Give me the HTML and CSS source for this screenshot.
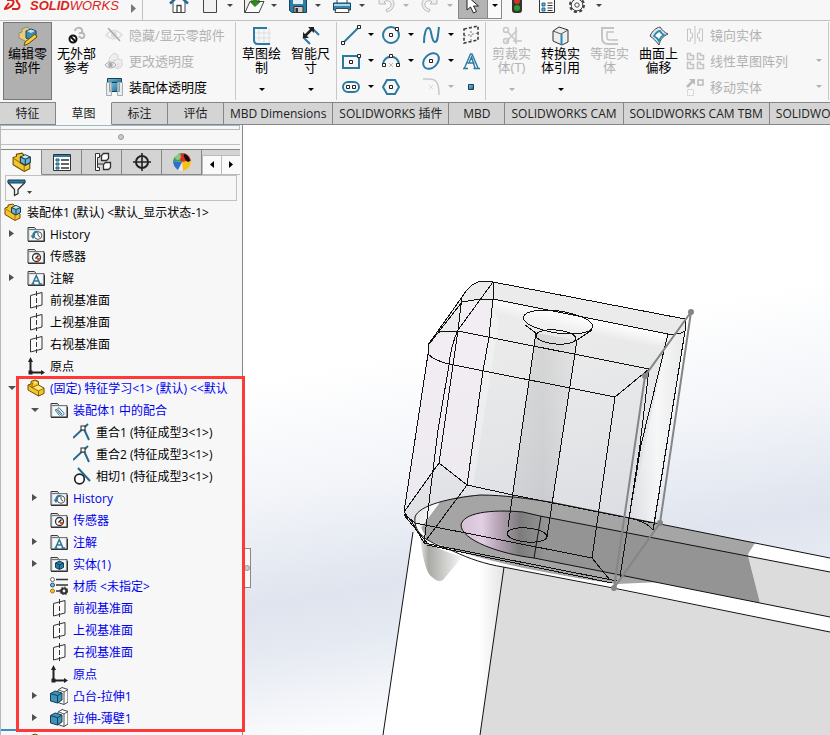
FILE: index.html
```html
<!DOCTYPE html>
<html lang="zh-CN">
<head>
  <meta charset="UTF-8" />
  <meta name="viewport" content="width=device-width, initial-scale=1.0" />
  <title>SOLIDWORKS - 装配体1</title>
  <link rel="stylesheet" href="styles.css">
</head>
<body>
  <!-- shared icons -->
  <svg class="sprite" aria-hidden="true">
    <defs>
      <linearGradient id="blue" x1="0" y1="0" x2="1" y2="1">
        <stop offset="0" stop-color="#7cc3e0" /><stop offset="1" stop-color="#1d6a92" />
      </linearGradient>
    </defs>
    <symbol id="caret" viewBox="0 0 6 4"><path d="M0 0h6L3 3z" fill="currentColor" /></symbol>
    <symbol id="closed" viewBox="0 0 8 10"><path d="M1 1v7l5-3.500z" fill="#505050" /></symbol>
    <symbol id="open" viewBox="0 0 8 10"><path d="M0 3h8L4 7z" fill="#505050" /></symbol>
    <symbol id="folder" viewBox="0 0 18 18">
      <path d="M1 16V2.500h6.500l1.500 2h8V16z" fill="#dfe3e6" stroke="#3c3c3c" />
      <path d="M1.500 4.500h15" stroke="#777" />
      <rect x="3" y="6" width="12.500" height="9" fill="#f6f8fa" />
      <path d="M1 16.500h16.500V6" fill="none" stroke="#333" />
    </symbol>
    <symbol id="history" viewBox="0 0 18 18">
      <use href="#folder" />
      <circle cx="11" cy="10.500" r="3.800" fill="#fff" stroke="#555" />
      <path d="M11 8v2.500l2 1.500" fill="none" stroke="#444" />
      <path d="M11 7c-3-1-5 1-5 4" fill="none" stroke="#2c7ba1" stroke-width="1.800" /><path d="M3.500 10.500h5L6 14z" fill="#2c7ba1" />
    </symbol>
    <symbol id="sensor" viewBox="0 0 18 18">
      <use href="#folder" />
      <circle cx="9.500" cy="10.500" r="4" fill="#fff" stroke="#333" stroke-width="1.300" />
      <path d="M8.500 11.500l3-3" stroke="#222" stroke-width="1.500" /><path d="M9.500 11l4 0-2 4z" fill="#e0461c" />
    </symbol>
    <symbol id="note" viewBox="0 0 18 18">
      <use href="#folder" />
      <path d="M5.500 15L9.300 6.500 13 15M6.700 12h5M4.500 15h3M11.500 15h3.500" fill="none" stroke="#2c7396" stroke-width="1.500" />
    </symbol>
    <symbol id="solids" viewBox="0 0 18 18">
      <use href="#folder" />
      <path d="M9.500 6l4 2v4.500l-4 2-4-2V8z" fill="#2c7ba1" stroke="#123f57" /><path d="M5.500 8l4 2 4-2M9.500 10v4.500" fill="none" stroke="#123f57" />
    </symbol>
    <symbol id="mates" viewBox="0 0 18 18">
      <use href="#folder" />
      <path d="M6 8l5 6c2 1 4-1 2.500-2.500L9.500 7.200c-1-1-2.500.3-1.500 1.300l4 4.500M6 8c-1 1 0 2.500 1 3.500l2.500 3" fill="none" stroke="#2c6f90" />
    </symbol>
    <symbol id="plane" viewBox="0 0 18 18">
      <path d="M3.500 4.500L15 1.500V14L3.500 17z" fill="#fafafa" stroke="#333" />
      <path d="M9.500 0v18" stroke="#333" stroke-dasharray="5 2" />
    </symbol>
    <symbol id="origin" viewBox="0 0 18 18">
      <path d="M3.500 3v12.500H15" fill="none" stroke="#222" stroke-width="2" />
      <path d="M3.500 0L6 5H1zM18 15.500l-4-2.500v5zM1.500 13.500h4v4h-4z" fill="#222" />
    </symbol>
    <symbol id="part" viewBox="0 0 18 18">
      <path d="M1 6l3-1V2.500L8 1l3.500 1.500V6L17 9v5.500L11.500 17 1 11z" fill="#f5c52c" stroke="#6d4d00" />
      <path d="M1 6l4 2.500v-4L11 2.500M5 8.500l6.500 3.500V17M11.500 12l5.500-3M5 8.500L11 6" fill="none" stroke="#8b6500" />
      <path d="M5.500 4l3-1.500 2.500 1-3.500 1.500zM6.500 8.500l4.500-2 5 2.700-4.500 2z" fill="#ffe68b" />
    </symbol>
    <symbol id="assembly" viewBox="0 0 18 18">
      <path d="M1 5l3-1V2l5-1 2 2v3l5 5v4l-5 2.500L1 11.500z" fill="#f5c52c" stroke="#6d4d00" />
      <path d="M2 6l9 6v5" fill="none" stroke="#a97b00" />
      <path d="M7.500 4.500L12 2.500l4.500 2v5L12 12 7.500 9.500z" fill="#6db3d3" stroke="#173e55" />
      <path d="M8.500 4.500L12 3l3.500 1.500L12 6z" fill="#c9e8f4" /><path d="M7.500 4.500l4.500 2 4.500-2M12 6.500V12" fill="none" stroke="#173e55" />
    </symbol>
    <symbol id="coincident" viewBox="0 0 18 18">
      <path d="M0 15L15 1M10.500 5l5.500 12" fill="none" stroke="#246a90" stroke-width="2" />
      <rect x="8" y="3" width="4" height="4" fill="#fff" stroke="#222" />
    </symbol>
    <symbol id="tangent" viewBox="0 0 18 18">
      <path d="M5 1l12 13" stroke="#246a90" stroke-width="2" />
      <circle cx="6.500" cy="12" r="4.800" fill="#fff" stroke="#222" stroke-width="1.700" />
    </symbol>
    <symbol id="material" viewBox="0 0 18 18">
      <path d="M6 2.500h12M6 8h12M6 14h12" stroke="#333" stroke-width="1.600" />
      <circle cx="2.500" cy="2.500" r="2" fill="#fff" stroke="#666" /><circle cx="2.500" cy="8" r="2" fill="#6cc0e5" stroke="#346" /><circle cx="2.500" cy="14" r="2" fill="#f5c52c" stroke="#a70" />
      <circle cx="14" cy="14" r="2.500" fill="#f7f7f7" stroke="#333" stroke-width="2.200" />
      <circle cx="14" cy="14" r="4" fill="none" stroke="#333" stroke-dasharray="1.600 1.500" />
    </symbol>
    <symbol id="extrude" viewBox="0 0 18 18">
      <path d="M8 3l4-2.500 6 2V15l-4 2.500-6-2z" fill="#fff" stroke="#444" /><path d="M14 17V5L9 3M14 5l4-2.500" fill="none" stroke="#555" />
      <path d="M.5 6.500L5 4l7 2v7l-4.500 3-7-2z" fill="#3f93bb" stroke="#123f57" /><path d="M.5 6.500l7 2.200L12 6M7.500 8.700V16" fill="none" stroke="#123f57" />
    </symbol>
  </svg>

  <header class="titlebar">
    <a class="brand" href="#">
      <svg class="brand-mark" width="22" height="14" viewBox="0 0 22 14"><path d="M3 2h4c4 0 3 5-1 7-2 1.500-4 2-6 2M5 5L1 10M20 1h-5c-3 0-3 2-1 4 3 3 1 6-1 6H8" fill="none" stroke="#d9241c" stroke-width="2" /></svg>
      <span><b>SOLID</b>WORKS</span>
    </a>
    <button class="flyout" aria-label="菜单"><svg width="6" height="10"><path d="M0 0v9l5-4.500z" fill="#777" /></svg></button>
    <div class="quick">
      <button class="tool home" aria-label="主页"><svg width="20" height="20" viewBox="0 0 20 20"><path d="M4 8v10.500h12V8" fill="#fff" stroke="#444" /><path d="M8 18.500v-7h4v7M14.500 2v4" fill="none" stroke="#444" stroke-width="1.300" /><path d="M1 9.500l9-8 9 8" fill="none" stroke="#1f6b92" stroke-width="2.500" /></svg></button>
      <button class="tool" aria-label="新建"><svg width="20" height="20" viewBox="0 0 20 20"><path d="M3.500 1.500H13l3.500 4v13h-13z" fill="#f2f2f2" stroke="#444" /></svg></button>
      <button class="drop" aria-label="更多"><svg width="6" height="4"><use href="#caret" /></svg></button>
      <button class="tool" aria-label="打开"><svg width="22" height="20" viewBox="0 0 22 20"><path d="M1.500 18.500V4H6l2 2h8v12.500z" fill="#eee" stroke="#444" /><path d="M2 18.500L7 7.500h14l-5 11z" fill="#fafafa" stroke="#444" /><path d="M10 3h4v5h3.500L12 13 7 8h3z" fill="#2f8a1c" /></svg></button>
      <button class="drop" aria-label="更多"><svg width="6" height="4"><use href="#caret" /></svg></button>
      <button class="tool" aria-label="保存"><svg width="20" height="20" viewBox="0 0 20 20"><path d="M1.500 1.500h17v17H4l-2.500-2z" fill="#2d7ea8" stroke="#14445f" /><path d="M5 2h10v8H5z" fill="#e3f0f6" /><path d="M6 12.500h9v6H6z" fill="#ccc" stroke="#333" /><path d="M7.500 14h2.500v4H7.500z" fill="#333" /></svg></button>
      <button class="drop" aria-label="更多"><svg width="6" height="4"><use href="#caret" /></svg></button>
      <button class="tool" aria-label="打印"><svg width="20" height="20" viewBox="0 0 20 20"><path d="M5 9V2h10v7" fill="#fff" stroke="#444" /><path d="M1.500 9h17v7h-17z" fill="#3186ae" stroke="#14445f" /><path d="M2 11h16" stroke="#a7d7ea" stroke-width="2" /><path d="M4 14.500h12l1 4H3z" fill="#fff" stroke="#444" /></svg></button>
      <button class="drop" aria-label="更多"><svg width="6" height="4"><use href="#caret" /></svg></button>
      <button class="tool" aria-label="撤消" disabled><svg width="18" height="20" viewBox="0 0 18 20"><path d="M2 3v7h7l-2-2c4-3 8 0 7 4-1 2-3 3-5 3.500l1 2.500c4-1 7-4 7-8 0-6-7-9-12-5z" fill="#eee" stroke="#bbb" /></svg></button>
      <button class="drop" aria-label="更多" disabled><svg width="6" height="4"><use href="#caret" /></svg></button>
      <button class="tool" aria-label="重做" disabled><svg width="18" height="20" viewBox="0 0 18 20"><path d="M16 3v7H9l2-2c-4-3-8 0-7 4 1 2 3 3 5 3.500L8 18c-4-1-7-4-7-8 0-6 7-9 12-5z" fill="#eee" stroke="#bbb" /></svg></button>
      <button class="drop" aria-label="更多" disabled><svg width="6" height="4"><use href="#caret" /></svg></button>
    </div>
    <div class="selector">
      <button class="select-tool" aria-label="选择"><svg width="14" height="20" viewBox="0 0 14 20"><path d="M1 1v14l3.500-3 3 6 3-1.500-3-5.500h5z" fill="#fff" stroke="#222" /></svg></button>
      <button class="select-drop" aria-label="更多"><svg width="6" height="4"><use href="#caret" /></svg></button>
    </div>
    <div class="options">
      <button class="tool" aria-label="重建模型"><svg width="12" height="20" viewBox="0 0 12 20"><rect x="1" y="0" width="10" height="19" rx="3" fill="#333" /><circle cx="6" cy="7" r="3" fill="#d33525" /><circle cx="6" cy="14" r="3" fill="#2e9b26" /></svg></button>
      <button class="tool" aria-label="文件属性"><svg width="16" height="20" viewBox="0 0 16 20"><path d="M.5 1.500h15v17H.5z" fill="#fff" stroke="#333" /><path d="M3 9h3v3H3zM3 14h3v3H3z" fill="#62b2d4" stroke="#1f6b92" /><path d="M1 3h14M8.500 9h5M8.500 11.500h5M8.500 14h5M8.500 16.500h5" stroke="#333" /></svg></button>
      <button class="tool" aria-label="选项"><svg width="18" height="20" viewBox="0 0 18 20"><circle cx="9" cy="11" r="7" fill="none" stroke="#444" stroke-width="2" stroke-dasharray="3.200 2.300" /><circle cx="9" cy="11" r="5.800" fill="#fafafa" stroke="#444" /><circle cx="9" cy="11" r="2.200" fill="#fff" stroke="#444" /></svg></button>
      <button class="drop" aria-label="更多"><svg width="6" height="4"><use href="#caret" /></svg></button>
    </div>
  </header>

  <section class="ribbon">
    <button class="big pressed">
      <svg width="20" height="20" viewBox="0 0 20 20"><path d="M1 7l3-1V3l5-2 3 2v6l-1 8-10-5z" fill="#e6cd86" stroke="#9b8a5e" /><path d="M8 5l5-2 5 2v6l-5 3-5-2z" fill="#3d8eb5" stroke="#183f55" /><path d="M9 5l4-1.500L17 5l-4 2z" fill="#bfe2f1" /><path d="M7 16L17 8l2 3-9 7-4 1.500z" fill="#f7cf3a" stroke="#6b4d00" /></svg>
      <span>编辑零<br>部件</span>
    </button>
    <button class="big">
      <svg width="20" height="20" viewBox="0 0 20 20"><path d="M8 5c0-4 6-4 7-1 1 2-1 4-3 3M13 7c4-1 5 2 4 4s-4 1-5-1" fill="none" stroke="#b8b8b8" stroke-width="2" /><circle cx="6" cy="13" r="3.500" fill="#fff" stroke="#111" stroke-width="2" /><path d="M3.500 10.500l5 5" stroke="#111" stroke-width="2" /></svg>
      <span>无外部<br>参考</span>
    </button>
    <div class="stack assembly-tools">
      <button disabled><svg width="20" height="20" viewBox="0 0 20 20"><path d="M2 10c5-6 11-6 16 0-5 5-11 5-16 0z" fill="none" stroke="#ddd" stroke-width="1.500" /><circle cx="10" cy="9.500" r="3" fill="#ddd" /><path d="M4 3l12 13" stroke="#aaa" stroke-width="1.500" /></svg>隐藏/显示零部件</button>
      <button disabled><svg width="20" height="20" viewBox="0 0 20 20"><path d="M6 6l4-4 4 2v4l4 1v6l-4 3-4-2-5-1V9z" fill="#eee" stroke="#d5d5d5" /><path d="M10 8v7M14 8l-4 2M14 12v5" stroke="#d5d5d5" /><path d="M1 14c3-4 8-4 11 0-3 4-8 4-11 0z" fill="#eee" stroke="#aaa" /><circle cx="6.500" cy="14" r="2.300" fill="#aaa" /></svg>更改透明度</button>
      <button><svg width="20" height="20" viewBox="0 0 20 20"><path d="M3.500 1.500h14v4h-14z" fill="url(#blue)" stroke="#123f57" /><path d="M5.500 5.500h10v9h-10z" fill="url(#blue)" stroke="#123f57" /><path d="M2.500 5.500h5v13h-5zM13.500 5.500h5v13h-5z" fill="#dde6ea" fill-opacity=".6" stroke="#aaa" /></svg>装配体透明度</button>
    </div>
    <div class="group sketch-main">
      <button class="big">
        <svg width="20" height="20" viewBox="0 0 20 20"><path d="M7 2v16M12 2v16M17 2v16M2 7h17M2 12h17" stroke="#ddd" /><path d="M15 2H2v12c0 3 2 4 4 4h12" fill="none" stroke="#2b7aa2" stroke-width="2" /></svg>
        <span>草图绘<br>制</span>
        <svg class="down" width="6" height="4"><use href="#caret" /></svg>
      </button>
      <button class="big">
        <svg width="20" height="20" viewBox="0 0 20 20"><path d="M2 11l7 7M11 2l7 7" stroke="#2b7aa2" stroke-width="2" /><path d="M4 10l7-7" stroke="#222" stroke-width="2.500" /><path d="M2 6v6h6zM7 1h6v6z" fill="#222" /></svg>
        <span>智能尺<br>寸</span>
        <svg class="down" width="6" height="4"><use href="#caret" /></svg>
      </button>
    </div>
    <div class="group entities">
      <button aria-label="直线"><svg width="20" height="20" viewBox="0 0 20 20"><path d="M2 18L18 2" stroke="#2b7aa2" stroke-width="2" /><path d="M.5 16.500h3v3h-3zM16.500.5h3v3h-3z" fill="#fff" stroke="#222" /></svg></button>
      <button aria-label="更多"><svg width="6" height="4"><use href="#caret" /></svg></button>
      <button aria-label="圆"><svg width="20" height="20" viewBox="0 0 20 20"><circle cx="10" cy="10" r="8" fill="none" stroke="#2b7aa2" stroke-width="2" /><path d="M8.500 8.500h3v3h-3zM14.500 2.500h3v3h-3z" fill="#fff" stroke="#222" /></svg></button>
      <button aria-label="更多"><svg width="6" height="4"><use href="#caret" /></svg></button>
      <button aria-label="样条曲线"><svg width="20" height="20" viewBox="0 0 20 20"><path d="M3 18C3 9 5 2 8 3c3 1 2 14 6 14 3 0 3-8 4-15" fill="none" stroke="#2b7aa2" stroke-width="2" /></svg></button>
      <button aria-label="更多"><svg width="6" height="4"><use href="#caret" /></svg></button>
      <button aria-label="基准面"><svg width="20" height="20" viewBox="0 0 20 20"><path d="M3 4l14-3v14L3 18z" fill="none" stroke="#333" stroke-width="1.500" stroke-dasharray="3 2" /><path d="M10 2v15M3 11l14-3" stroke="#777" stroke-dasharray="2 2" /></svg></button>

      <button aria-label="矩形"><svg width="20" height="20" viewBox="0 0 20 20"><path d="M2 5h16v12H2z" fill="none" stroke="#2b7aa2" stroke-width="2" /><path d="M8.500 9.500h3v3h-3zM16.500 3.500h3v3h-3z" fill="#fff" stroke="#222" /></svg></button>
      <button aria-label="更多"><svg width="6" height="4"><use href="#caret" /></svg></button>
      <button aria-label="圆弧"><svg width="20" height="20" viewBox="0 0 20 20"><path d="M2 14c0-11 16-11 16 0" fill="none" stroke="#2b7aa2" stroke-width="2" /><path d="M8.500 3.500h3v3h-3zM1.500 12.500h3v3h-3zM15.500 12.500h3v3h-3z" fill="#fff" stroke="#222" /><path d="M8 12l4 4M12 12l-4 4" stroke="#bbb" /></svg></button>
      <button aria-label="更多"><svg width="6" height="4"><use href="#caret" /></svg></button>
      <button aria-label="椭圆"><svg width="20" height="20" viewBox="0 0 20 20"><ellipse cx="10" cy="10" rx="9" ry="6.500" transform="rotate(-45 10 10)" fill="none" stroke="#2b7aa2" stroke-width="2" /><path d="M8.500 8.500h3v3h-3z" fill="#fff" stroke="#222" /></svg></button>
      <button aria-label="更多"><svg width="6" height="4"><use href="#caret" /></svg></button>
      <button aria-label="文字"><svg width="20" height="20" viewBox="0 0 20 20"><path d="M3.500 17L9.500 3h1.500l6 14M6.500 12h7M2 17.500h5M12.500 17.500H19M8 12l2.500-6 3.500 11" fill="none" stroke="#2b7aa2" stroke-width="1.400" /></svg></button>

      <button aria-label="槽口"><svg width="20" height="20" viewBox="0 0 20 20"><rect x="2" y="5" width="16" height="10" rx="5" fill="none" stroke="#2b7aa2" stroke-width="2" /><path d="M5.500 8.500h3v3h-3zM11.500 8.500h3v3h-3z" fill="#fff" stroke="#222" /></svg></button>
      <button aria-label="更多"><svg width="6" height="4"><use href="#caret" /></svg></button>
      <button aria-label="多边形"><svg width="20" height="20" viewBox="0 0 20 20"><path d="M6 3h8l4 7-4 7H6l-4-7z" fill="none" stroke="#2b7aa2" stroke-width="2" /><path d="M8.500 8.500h3v3h-3z" fill="#fff" stroke="#222" /></svg></button>
      <span></span>
      <button aria-label="圆角" disabled><svg width="20" height="20" viewBox="0 0 20 20"><path d="M2 2h6c7 0 10 3 10 16" fill="none" stroke="#c8c8c8" stroke-width="1.500" /><path d="M8 8l4 4M12 8l-4 4" stroke="#ddd" /></svg></button>
      <button aria-label="更多" disabled><svg width="6" height="4"><use href="#caret" /></svg></button>
      <button aria-label="点"><svg width="20" height="20" viewBox="0 0 20 20"><path d="M7.500 7.500h5v5h-5z" fill="url(#blue)" stroke="#173e55" /></svg></button>
    </div>
    <div class="group modify">
      <button class="big" disabled>
        <svg width="20" height="20" viewBox="0 0 20 20"><path d="M5 5l10 11M4 16L15 4M14 1v17M11 15h9" stroke="#c8c8c8" stroke-width="1.600" /><circle cx="4" cy="4" r="2.500" fill="none" stroke="#c8c8c8" stroke-width="1.500" /><circle cx="4" cy="15" r="2.500" fill="none" stroke="#c8c8c8" stroke-width="1.500" /></svg>
        <span>剪裁实<br>体(T)</span>
        <svg class="down" width="6" height="4"><use href="#caret" /></svg>
      </button>
      <button class="big">
        <svg width="20" height="20" viewBox="0 0 20 20"><path d="M2 5l6-4 9 3v12l-6 3-9-4z" fill="#eee" stroke="#333" /><path d="M2 5l8 3 7-4" fill="none" stroke="#555" /><path d="M10.500 8v11" stroke="#2b8ab5" stroke-width="2" /></svg>
        <span>转换实<br>体引用</span>
        <svg class="down" width="6" height="4"><use href="#caret" /></svg>
      </button>
      <button class="big" disabled>
        <svg width="20" height="20" viewBox="0 0 20 20"><path d="M14 2H2v10c0 4 2 6 6 6h10" fill="none" stroke="#c4c4c4" stroke-width="2" /><path d="M14 6H7v6c0 1 1 2 3 2h8" fill="none" stroke="#c4c4c4" stroke-width="1.500" /></svg>
        <span>等距实<br>体</span>
      </button>
      <button class="big">
        <svg width="20" height="20" viewBox="0 0 20 20"><path d="M1 10c3-6 6-8 10-9 2 3 5 6 8 7-5 2-8 6-9 11-3-4-6-7-9-9z" fill="#dfe7ea" stroke="#444" /><path d="M5 10c2-3 4-5 6-5 1 2 2 3 4 4-3 1-4 3-5 6-1-2-3-4-5-5z" fill="#fff" stroke="#2b8ab5" stroke-width="1.800" /></svg>
        <span>曲面上<br>偏移</span>
      </button>
    </div>
    <div class="stack patterns">
      <button disabled><svg width="20" height="20" viewBox="0 0 20 20"><path d="M2.500 4v12h3v-3h2V8h-2V4zM17.500 4v12h-3v-3h-2V8h2V4z" fill="none" stroke="#c4c4c4" /><path d="M10 1v18" stroke="#c4c4c4" /></svg><span>镜向实体</span></button>
      <button disabled><svg width="20" height="20" viewBox="0 0 20 20"><path d="M2.500 2.500h3v2h3v4h-6zM12.500 2.500h3v2h3v4h-6zM2.500 11.500h3v2h3v4h-6zM12.500 11.500h3v2h3v4h-6z" fill="none" stroke="#c4c4c4" stroke-width="1.500" /></svg><span>线性草图阵列</span><svg width="6" height="4"><use href="#caret" /></svg></button>
      <button disabled><svg width="20" height="20" viewBox="0 0 20 20"><path d="M2 10l6-6" stroke="#bbb" stroke-width="2.500" /><path d="M4 2h6v6z" fill="#bbb" /><path d="M13 3h5v5h-5z" fill="none" stroke="#bbb" stroke-width="1.500" /><path d="M2.500 12.500h6v6h-6z" fill="none" stroke="#ccc" stroke-dasharray="2 1" /></svg><span>移动实体</span><svg width="6" height="4"><use href="#caret" /></svg></button>
    </div>
  </section>

  <nav class="tabs">
    <a href="#">特征</a>
    <a href="#" class="active">草图</a>
    <a href="#">标注</a>
    <a href="#">评估</a>
    <a href="#">MBD Dimensions</a>
    <a href="#">SOLIDWORKS 插件</a>
    <a href="#">MBD</a>
    <a href="#">SOLIDWORKS CAM</a>
    <a href="#">SOLIDWORKS CAM TBM</a>
    <a href="#">SOLIDWORKS Inspection</a>
  </nav>

  <main class="workspace">
    <aside class="panel">
      <div class="preview-edge"></div>
      <div class="grip"><i></i></div>
      <div class="manager-tabs">
        <button class="active" aria-label="设计树"><svg width="20" height="20" viewBox="0 0 18 18"><use href="#assembly" /></svg></button>
        <button aria-label="属性"><svg width="20" height="20" viewBox="0 0 20 20"><path d="M1.500 2.500h17v16h-17z" fill="#fff" stroke="#333" /><path d="M2 4h16" stroke="#2b7aa2" stroke-width="2" /><path d="M4 7h3v2H4zM4 11h3v2H4zM4 15h3v2H4z" fill="#62b2d4" stroke="#1f5f80" /><path d="M9 8h8M9 12h8M9 16h8" stroke="#333" stroke-width="1.300" /></svg></button>
        <button aria-label="配置"><svg width="20" height="20" viewBox="0 0 20 20"><path d="M3.500 1.500h4v4h-2v10h2v3h-4z" fill="#fff" stroke="#333" /><path d="M7 4h4M6 12h5" stroke="#333" /><path d="M9.500 3.500l2-2h5v5l-2 2h-5zM11.500 12.500l2-2h5v5l-2 2h-5z" fill="#fff" stroke="#333" stroke-width="1.300" /></svg></button>
        <button aria-label="尺寸"><svg width="20" height="20" viewBox="0 0 20 20"><circle cx="10" cy="10" r="6" fill="none" stroke="#222" stroke-width="2" /><path d="M10 1v18M1 10h18" stroke="#222" stroke-width="1.600" /></svg></button>
        <button aria-label="外观"><svg width="20" height="20" viewBox="0 0 20 20"><circle cx="10" cy="10" r="9" fill="#e9e9e9" /><path d="M10 10L1 9c1-5 5-8 9-8z" fill="#3aa53a" /><path d="M10 10l-3-3L10 1c5 0 8 3 9 8z" fill="#d83024" /><path d="M10 10l9-1c0 6-4 9-8 10z" fill="#f3c11b" /><path d="M10 10L1 9c0 4 2 7 5 9z" fill="#2d6fce" /><path d="M12 2c3 0 6 4 6 7l-2 1c-2-1-5-5-4-8z" fill="#111" /><circle cx="6" cy="5" r="3" fill="#fff" opacity=".4" /></svg></button>
        <button class="rest" aria-label="显示"></button>
        <div class="scroller">
          <button aria-label="向左"><svg width="5" height="8"><path d="M4 0v7L0 3.500z" /></svg></button>
          <button aria-label="向右"><svg width="5" height="8"><path d="M0 0v7l4-3.500z" /></svg></button>
        </div>
      </div>
      <label class="filter">
        <svg width="26" height="20" viewBox="0 0 26 20"><path d="M1.500 3v2l6 6.500v6l3.500-2v-4L17.500 5V3z" fill="#fafafa" stroke="#333" stroke-width="1.300" /><path d="M1 2h17v3H1z" fill="#2b7aa2" stroke="#173e55" /><path d="M20 13h5l-2.500 3z" fill="#444" /></svg>
        <input type="text" aria-label="过滤">
      </label>

      <ul class="tree">
        <li>
          <div class="row root"><svg class="ico"><use href="#assembly" /></svg>装配体1 (默认) &lt;默认_显示状态-1&gt;</div>
          <ul>
            <li><div class="row"><button class="twist" aria-label="展开"><svg width="8" height="10"><use href="#closed" /></svg></button><svg class="ico"><use href="#history" /></svg>History</div></li>
            <li><div class="row"><span class="twist"></span><svg class="ico"><use href="#sensor" /></svg>传感器</div></li>
            <li><div class="row"><button class="twist" aria-label="展开"><svg width="8" height="10"><use href="#closed" /></svg></button><svg class="ico"><use href="#note" /></svg>注解</div></li>
            <li><div class="row"><span class="twist"></span><svg class="ico"><use href="#plane" /></svg>前视基准面</div></li>
            <li><div class="row"><span class="twist"></span><svg class="ico"><use href="#plane" /></svg>上视基准面</div></li>
            <li><div class="row"><span class="twist"></span><svg class="ico"><use href="#plane" /></svg>右视基准面</div></li>
            <li><div class="row"><span class="twist"></span><svg class="ico"><use href="#origin" /></svg>原点</div></li>
            <li class="editing">
              <div class="row"><button class="twist" aria-label="折叠"><svg width="8" height="10"><use href="#open" /></svg></button><svg class="ico"><use href="#part" /></svg>(固定) 特征学习&lt;1&gt; (默认) &lt;&lt;默认</div>
              <ul>
                <li>
                  <div class="row"><button class="twist" aria-label="折叠"><svg width="8" height="10"><use href="#open" /></svg></button><svg class="ico"><use href="#mates" /></svg>装配体1 中的配合</div>
                  <ul class="mate-list">
                    <li><div class="row"><span class="twist"></span><svg class="ico"><use href="#coincident" /></svg>重合1 (特征成型3&lt;1&gt;)</div></li>
                    <li><div class="row"><span class="twist"></span><svg class="ico"><use href="#coincident" /></svg>重合2 (特征成型3&lt;1&gt;)</div></li>
                    <li><div class="row"><span class="twist"></span><svg class="ico"><use href="#tangent" /></svg>相切1 (特征成型3&lt;1&gt;)</div></li>
                  </ul>
                </li>
                <li><div class="row"><button class="twist" aria-label="展开"><svg width="8" height="10"><use href="#closed" /></svg></button><svg class="ico"><use href="#history" /></svg>History</div></li>
                <li><div class="row"><span class="twist"></span><svg class="ico"><use href="#sensor" /></svg>传感器</div></li>
                <li><div class="row"><button class="twist" aria-label="展开"><svg width="8" height="10"><use href="#closed" /></svg></button><svg class="ico"><use href="#note" /></svg>注解</div></li>
                <li><div class="row"><button class="twist" aria-label="展开"><svg width="8" height="10"><use href="#closed" /></svg></button><svg class="ico"><use href="#solids" /></svg>实体(1)</div></li>
                <li><div class="row"><span class="twist"></span><svg class="ico"><use href="#material" /></svg>材质 &lt;未指定&gt;</div></li>
                <li><div class="row"><span class="twist"></span><svg class="ico"><use href="#plane" /></svg>前视基准面</div></li>
                <li><div class="row"><span class="twist"></span><svg class="ico"><use href="#plane" /></svg>上视基准面</div></li>
                <li><div class="row"><span class="twist"></span><svg class="ico"><use href="#plane" /></svg>右视基准面</div></li>
                <li><div class="row"><span class="twist"></span><svg class="ico"><use href="#origin" /></svg>原点</div></li>
                <li><div class="row"><button class="twist" aria-label="展开"><svg width="8" height="10"><use href="#closed" /></svg></button><svg class="ico"><use href="#extrude" /></svg>凸台-拉伸1</div></li>
                <li><div class="row"><button class="twist" aria-label="展开"><svg width="8" height="10"><use href="#closed" /></svg></button><svg class="ico"><use href="#extrude" /></svg>拉伸-薄壁1</div></li>
              </ul>
            </li>
            <li class="rollback"></li>
            <li><div class="row"><span class="twist"></span><svg class="ico"><use href="#part" /></svg></div></li>
          </ul>
        </li>
      </ul>
    </aside>

    <section class="viewport">
      <svg class="model" viewBox="243 125 587 610" preserveAspectRatio="xMinYMin slice">
        <defs>
          <linearGradient id="boss" x1="0" x2="1">
            <stop offset="0" stop-color="#fff" /><stop offset=".8" stop-color="#fff" /><stop offset="1" stop-color="#e4e4e4" />
          </linearGradient>
          <linearGradient id="slot" gradientUnits="userSpaceOnUse" x1="461" y1="0" x2="545" y2="0">
            <stop offset="0" stop-color="#d6c0d6" /><stop offset=".25" stop-color="#e2cfe2" /><stop offset=".45" stop-color="#b5a3b5" /><stop offset=".7" stop-color="#7c7c7c" /><stop offset="1" stop-color="#949494" />
          </linearGradient>
          <linearGradient id="bore" x1="0" x2="1">
            <stop offset="0" stop-color="#000" stop-opacity=".06" /><stop offset=".5" stop-color="#000" stop-opacity=".09" /><stop offset="1" stop-color="#000" stop-opacity=".03" />
          </linearGradient>
          <linearGradient id="drip" x1="0" x2="1">
            <stop offset="0" stop-color="#e8e8e6" /><stop offset=".2" stop-color="#a9a9a5" /><stop offset="1" stop-color="#f6f6f6" />
          </linearGradient>
          <linearGradient id="glow" x1="0" x2="1">
            <stop offset="0" stop-color="#fff" stop-opacity="0" /><stop offset=".5" stop-color="#fff" stop-opacity=".7" /><stop offset="1" stop-color="#fff" stop-opacity="0" />
          </linearGradient>
          <linearGradient id="bevel" gradientUnits="userSpaceOnUse" x1="580" y1="317" x2="577" y2="331">
            <stop offset="0" stop-color="#fff" stop-opacity=".9" /><stop offset="1" stop-color="#fff" stop-opacity="0" />
          </linearGradient>
          <linearGradient id="lit" x1="0" x2="1">
            <stop offset="0" stop-color="#e6e6e6" /><stop offset="1" stop-color="#fff" />
          </linearGradient>
        </defs>

        <!-- transparent block -->
        <path d="M462 297C468 287 475 281 484 281L493 282 685 319 685 332 653 530 620 577 592 558 424 543 404 512 428 354V345z" fill="#cfcfcf" fill-opacity=".42" />
        <path d="M462 302L493 299 489 337 467 485 439 463 404 512 428 354 435 337 458 331z" fill="#f8effa" fill-opacity=".5" />
        <path d="M493 300L668 334 660 349 493 317z" fill="url(#bevel)" />
        <path d="M493 310L489 337 467 485 473 486 499 320z" fill="#fff" fill-opacity=".3" />
        <path d="M536 333L577 340 547 537 508 527z" fill="url(#bore)" />
        <path d="M668 334L685 331 653 530 630 518z" fill="url(#glow)" />
        <ellipse cx="558" cy="322" rx="35" ry="11" transform="rotate(8 558 322)" fill="#fff" fill-opacity=".25" />

        <!-- slotted base -->
        <path d="M413 532L383 735H480L504 567 460 535z" fill="url(#boss)" />
        <path d="M504 567L830 632V735H480z" fill="#dcdcdc" />
        <path d="M415 517C419 505 450 498 480 495 505 495 530 499 550 502L660 524 830 558V632L503 567C465 560 410 545 415 517z" fill="#fff" />
        <path d="M440 502C452 498 466 495 480 495 505 495 530 499 550 502L660 524 755 543 748 554 760 601 660 582 617 584C560 576 480 562 427 540L421 527z" fill="#a5a5a5" />
        <path d="M415 517C420 508 430 504 440 502L421 528C416 524 415 521 415 517z" fill="url(#lit)" />
        <path d="M461 525C463 513 490 509 523 512L540 516 748 556 760 603 620 575 534 558C500 554 461 540 461 525z" fill="url(#slot)" />
        <path d="M748 556L830 572V617L760 603z" fill="#dcdcdc" />
        <path d="M420 537C422 552 425 572 432 577Q438 583 443 580L462 557C446 552 430 546 420 537z" fill="url(#drip)" />

        <g class="edges base-edges">
          <path d="M415 517C419 505 450 498 480 495 505 495 530 499 550 502L660 524 830 558" />
          <path d="M415 517C413 535 430 543 453 551 470 559 485 564 503 567L613 588 830 632" />
          <path d="M830 572L540 516 523 512C490 509 463 513 461 525 461 540 500 554 534 558L620 575 830 617" />
          <path d="M541 516L534 558M413 532L383 735" />
          <path d="M504 567L480 735" />
        </g>
        <g class="edges block-edges">
          <path d="M462 297C468 287 475 281 484 281L493 282 685 319" />
          <path d="M462 302L480 299H493L668 334Q680 335 685 331" />
          <path d="M493 282V299L489 337 483 371 467 485M493 282L458 330M462 297L458 330 453 365 439 463M458 330C452 343 450 355 449 365L438 430 424 543" />
          <path d="M462 297L428 345V354L404 512M462 302L430 343M428 345C434 336 438 331 445 331H458L649 369" />
          <path d="M428 354C433 359 440 362 449 364L615 397 649 369M615 397L592 558" />
          <path d="M536 332L508 527M577 340L547 537M525 325L536 333M592 330L577 340" />
          <ellipse cx="558" cy="322" rx="35" ry="11" transform="rotate(8 558 322)" />
          <ellipse cx="556" cy="337" rx="20" ry="7" transform="rotate(5 556 337)" />
          <ellipse cx="527" cy="535" rx="20" ry="7" transform="rotate(5 527 535)" />
          <path d="M685 319V331L653 530M686 325L654 525M668 334L641 445 628 525 620 577M649 369L640 445 628 525" />
          <path d="M439 463L467 485 513 495 653 523M439 463L404 512M467 485L424 543M404 512L412 522 424 543M404 515L428 544M404 514L415 523 592 558 610 580M630 518Q647 522 653 530" />
          <path d="M424 543L617 581M427 545L612 583" />
        </g>
        <g class="sketch-lines">
          <path d="M691 312L645 376 614 588 660 523z" />
          <circle cx="691" cy="312" r="2" /><circle cx="645" cy="376" r="2" /><circle cx="614" cy="588" r="2" /><circle cx="660" cy="523" r="2" />
        </g>
      </svg>
      <button class="panel-handle" aria-label="折叠面板"><i></i></button>
    </section>
  </main>
</body>
</html>
```
FILE: styles.css
```css
* {
  box-sizing: border-box;
}
body {
  margin: 0;
  height: 100vh;
  display: flex;
  flex-direction: column;
  overflow: hidden;
  background: #f7f7f7;
  color: #000;
  font-family: "Open Sans", "Noto Sans CJK SC", sans-serif;
  font-size: 12px;
}
button {
  padding: 0;
  border: 0;
  background: none;
  color: inherit;
  font: inherit;
}
button:disabled {
  color: #b2b2b2;
}
svg {
  display: block;
  flex: none;
}
ul {
  margin: 0;
  padding: 0;
  list-style: none;
}
.sprite {
  position: absolute;
  width: 0;
  height: 0;
}

/* Title bar */
.titlebar {
  display: flex;
  align-items: flex-end;
  flex: none;
  height: 21px;
  overflow: hidden;
  border-bottom: 1px solid #c0c0c0;
}
.brand {
  display: flex;
  align-items: flex-end;
  width: 126px;
  height: 20px;
  padding: 0 0 8px 4px;
  gap: 4px;
  color: #d9241c;
  font: italic 13px/13px "Liberation Sans Narrow", sans-serif;
  text-decoration: none;
}
.brand b {
  font-family: "Liberation Sans", sans-serif;
}
.flyout {
  width: 17px;
  height: 20px;
  padding: 0 0 2px 5px;
  border-right: 1px solid #c0c0c0;
}
.quick,
.options {
  display: flex;
  align-items: flex-end;
  padding-bottom: 6px;
}
.tool {
  display: flex;
  justify-content: center;
  width: 24px;
}
.home {
  margin: 0 7px 0 24px;
}
.drop {
  display: flex;
  justify-content: center;
  width: 16px;
  height: 12px;
  margin-right: 4px;
  padding-top: 2px;
  color: #444;
}
.drop:last-child {
  margin-right: 0;
}
.selector {
  display: flex;
  height: 26px;
  margin-bottom: 1px;
}
.select-tool,
.select-drop {
  display: flex;
  justify-content: center;
  width: 30px;
  padding-top: 1px;
  border: 1px solid #888;
  background: #b3b3b3;
}
.select-drop {
  width: 14px;
  padding-top: 10px;
  border-left: 0;
  background: #fafafa;
}
.options {
  gap: 6px;
  margin-left: 3px;
}
.options .drop {
  margin-left: -4px;
}

/* Ribbon */
.ribbon {
  display: flex;
  flex: none;
  height: 81px;
  padding: 1px 1px 2px 3px;
  font-size: 13px;
  line-height: 14px;
  white-space: nowrap;
}
.big {
  display: flex;
  flex-direction: column;
  align-items: center;
  width: 49px;
  height: 78px;
  padding-top: 4px;
}
.pressed {
  border: 1px solid #777;
  background: #b0b0b0;
  padding-top: 3px;
}
.down {
  margin: auto 0 8px;
}
.stack {
  display: grid;
  grid-auto-rows: 26px;
}
.stack button {
  display: flex;
  align-items: center;
  gap: 5px;
  text-align: left;
}
.assembly-tools {
  width: 134px;
  padding-left: 3px;
}
.group {
  display: flex;
  border-left: 1px solid #c8c8c8;
}
.sketch-main {
  width: 101px;
  padding-left: 1px;
}
.entities {
  display: grid;
  grid-template-columns: 26px 14px 26px 14px 26px 14px 26px;
  grid-auto-rows: 26px;
  width: 149px;
  padding-left: 1px;
}
.entities button {
  display: flex;
  align-items: center;
  justify-content: center;
}
.modify {
  width: 199px;
  padding-left: 1px;
}
.patterns {
  flex: 1;
  padding: 0 6px 0 1px;
  border-right: 1px solid #c8c8c8;
}
.patterns span {
  flex: 1;
}

/* Command tabs */
.tabs {
  display: flex;
  flex: none;
  height: 23px;
  overflow: hidden;
  background: #d4d4d4;
}
.tabs a {
  flex: none;
  min-width: 56px;
  padding: 0 6px;
  border: solid #868686;
  border-width: 1px 1px 1px 0;
  color: #222;
  line-height: 21px;
  text-align: center;
  text-decoration: none;
  white-space: nowrap;
}
.tabs .active {
  border-top-color: #f7f7f7;
  border-bottom-color: #f7f7f7;
  background: #f7f7f7;
}

/* Feature manager */
.workspace {
  display: flex;
  flex: 1;
  min-height: 0;
}
.panel {
  position: relative;
  z-index: 1;
  flex: none;
  width: 243px;
  border: solid #8a8a8a;
  border-width: 0 1px 0 1px;
  border-left-color: #b8b8b8;
  background: #f7f7f7;
}
.preview-edge {
  height: 5px;
  margin-right: 2px;
  border: 1px solid #b8b8b8;
  border-top-color: #9ab8c2;
  border-left: 0;
}
.grip {
  display: flex;
  align-items: center;
  justify-content: center;
  height: 15px;
  margin: 0 2px 4px 0;
  border-bottom: 1px solid #c0c0c0;
}
.grip i,
.panel-handle i {
  width: 6px;
  height: 6px;
  border: 1px solid #999;
  border-radius: 50%;
  background: #ccc;
}
.manager-tabs {
  position: relative;
  display: flex;
  height: 26px;
  margin-right: 2px;
  background: #d4d4d4;
}
.manager-tabs > button {
  display: flex;
  align-items: center;
  justify-content: center;
  width: 40px;
  border: solid #868686;
  border-width: 1px 1px 1px 0;
}
.manager-tabs .active {
  width: 41px;
  padding-left: 2px;
  border-bottom-color: #f7f7f7;
  background: #f7f7f7;
}
.manager-tabs .rest {
  flex: 1;
  border-right: 0;
}
.scroller {
  position: absolute;
  right: 0;
  bottom: 0;
  display: flex;
}
.scroller button {
  display: flex;
  align-items: center;
  justify-content: center;
  width: 19px;
  height: 20px;
  border: 1px solid #bbb;
  border-right: 0;
  background: #fafafa;
}
.filter {
  display: flex;
  align-items: center;
  height: 26px;
  margin: 0 5px 0 4px;
  padding-left: 1px;
  border: 1px solid #c0c0c0;
}
.filter input {
  flex: 1;
  min-width: 0;
  height: 22px;
  border: 0;
  outline: 0;
  background: none;
  font: inherit;
}
.row {
  display: flex;
  align-items: center;
  height: 22px;
  margin-right: 1px;
  padding-left: 4px;
  overflow: hidden;
  white-space: nowrap;
}
.row.root {
  padding-left: 3px;
}
.ico {
  width: 18px;
  height: 18px;
  margin-right: 5px;
}
.twist {
  flex: none;
  width: 22px;
  height: 14px;
  padding-left: 3px;
}
.tree ul ul .row {
  padding-left: 27px;
}
.tree ul ul ul .row {
  padding-left: 50px;
}
.editing {
  position: relative;
  color: #0000f0;
}
/* red frame round the component being edited */
.editing::before {
  content: "";
  position: absolute;
  z-index: 1;
  inset: -1px -3px -3px 15px;
  border: 3px solid #ff3838;
  pointer-events: none;
}
.mate-list {
  color: #000;
}
.rollback {
  height: 2px;
  background: #3a8fc8;
}

/* Graphics area */
.viewport {
  position: relative;
  flex: 1;
  min-width: 0;
  overflow: hidden;
  background: linear-gradient(170deg, #fff 36%, #f3f5f9 52%, #dfe4ee 68%, #e6eaf2 75%, #fafbfd 87%, #fff);
}
.model {
  width: 100%;
  height: 100%;
}
.edges {
  fill: none;
  stroke: #111;
}
.block-edges {
  shape-rendering: crispEdges;
}
.sketch-lines {
  fill: #858585;
  stroke: #858585;
  stroke-width: 2;
}
.sketch-lines path {
  fill: none;
}
.panel-handle {
  position: absolute;
  top: 423px;
  left: 0;
  display: flex;
  align-items: center;
  width: 8px;
  height: 40px;
  border: 1px solid #888;
  background: #f7f7f7;
}
```
